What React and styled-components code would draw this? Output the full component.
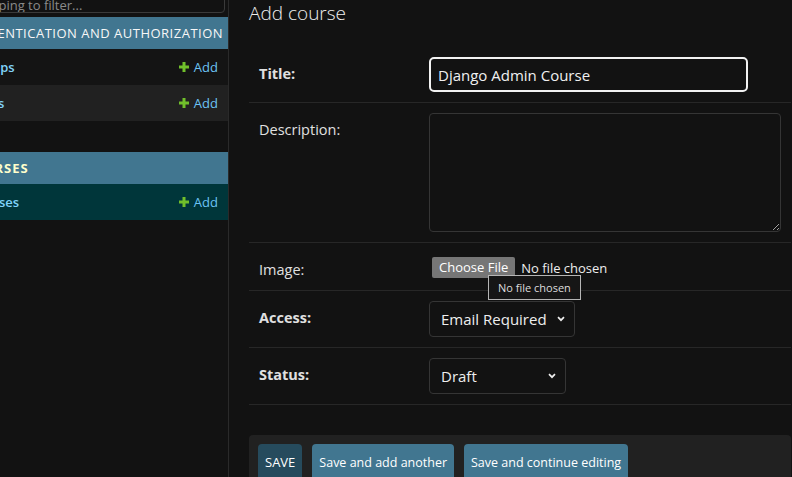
import React from "react";
import styled, { createGlobalStyle } from "styled-components";

const FONT = `"Open Sans", "Noto Sans", "Liberation Sans", sans-serif`;

const GlobalStyle = createGlobalStyle`
  html, body {
    margin: 0;
    padding: 0;
    background: #121212;
    color: #eeeeee;
    font-family: ${FONT};
  }
  * { box-sizing: border-box; }
`;

const Page = styled.div`
  display: flex;
  width: 792px;
  height: 477px;
  overflow: hidden;
  background: #121212;
`;

/* ---------- sidebar ---------- */

const Sidebar = styled.nav`
  flex: 0 0 229px;
  height: 100%;
  overflow: hidden;
  border-right: 1px solid #2a2a2a;
`;

// the sidebar is scrolled to the right and down a little
const SidebarInner = styled.div`
  width: 275px;
  margin: -17px 0 0 -47px;
`;

const FilterInput = styled.input`
  display: block;
  width: 272px;
  height: 30px;
  margin: 0 0 4px 0;
  padding: 14px 6px 0 1px;
  font-family: ${FONT};
  font-size: 13px;
  color: #eee;
  background: #121212;
  border: 1px solid #3a3a3a;
  border-radius: 4px;
  &::placeholder { color: #8a8a8a; }
`;

const Module = styled.div`
  margin-bottom: 31px;
`;

const Caption = styled.div`
  height: 32px;
  padding: 8px 8px 8px ${p => (p.$current ? "10px" : "8px")};
  font-size: 13px;
  line-height: 16px;
  letter-spacing: ${p => (p.$current ? "1px" : "0.5px")};
  text-transform: uppercase;
  background: #417690;
  color: ${p => (p.$current ? "#ffffcc" : "#f7f7f7")};
  font-weight: ${p => (p.$current ? 700 : 400)};
  white-space: nowrap;
`;

const ModelRow = styled.div`
  display: flex;
  align-items: center;
  justify-content: space-between;
  height: 36px;
  padding: 0 10px 0 16px;
  background: ${p => (p.$selected ? "#00363a" : p.$alt ? "#212121" : "#141414")};
`;

const ModelLink = styled.span`
  font-size: 13px;
  font-weight: 600;
  color: #81d4fa;
`;

const AddLink = styled.span`
  display: flex;
  align-items: center;
  gap: 5px;
  font-size: 13px;
  color: #6cc4f5;
`;

const PlusIcon = () => (
  <svg width="10" height="10" viewBox="0 0 10 10">
    <path d="M3.5 0h3v3.5H10v3H6.5V10h-3V6.5H0v-3h3.5z" fill="#70bf2b" />
  </svg>
);

/* ---------- main ---------- */

const Main = styled.main`
  flex: 1;
  padding: 0 2px 0 20px;
`;

const Title = styled.h1`
  margin: 0 0 21px;
  font-size: 19px;
  line-height: 26px;
  font-weight: 300;
  color: #eeeeee;
`;

const FormRow = styled.div`
  position: relative;
  display: flex;
  align-items: flex-start;
  padding: 10px;
  border-bottom: 1px solid #272727;
`;

const Label = styled.label`
  flex: 0 0 170px;
  padding: 7px 10px 0 0;
  font-size: 14.5px;
  line-height: 20px;
  font-weight: ${p => (p.$required ? 700 : 400)};
  color: #e0e0e0;
`;

const TextInput = styled.input`
  width: 319px;
  height: 35px;
  padding: 0 7px;
  font-family: ${FONT};
  font-size: 15px;
  color: #f0f0f0;
  background: #121212;
  border: 2px solid #f2f2f2;
  border-radius: 5px;
  outline: none;
`;

const TextArea = styled.textarea`
  width: 352px;
  height: 119px;
  padding: 5px 6px;
  font-family: ${FONT};
  font-size: 14px;
  color: #eee;
  background: #121212;
  border: 1px solid #353535;
  border-radius: 4px;
  outline: none;
`;

const FileWidget = styled.div`
  display: flex;
  align-items: center;
  gap: 6px;
  padding: 4px 0 0 3px;
  font-size: 13px;
  color: #eeeeee;
`;

const FileButton = styled.span`
  display: inline-block;
  height: 21px;
  padding: 0 7px;
  line-height: 21px;
  background: #767676;
  border-radius: 2px;
  color: #ffffff;
`;

const Tooltip = styled.div`
  position: absolute;
  left: 239px;
  top: 32px;
  height: 25px;
  padding: 0 9px;
  font-size: 11px;
  line-height: 23px;
  color: #dddddd;
  background: #161616;
  border: 1px solid #b5b5b5;
  white-space: nowrap;
`;

const SelectBox = styled.div`
  display: flex;
  align-items: center;
  justify-content: space-between;
  width: ${p => p.$width}px;
  height: 36px;
  padding: 0 9px 0 11px;
  font-size: 15px;
  color: #eeeeee;
  background: #121212;
  border: 1px solid #353535;
  border-radius: 4px;
`;

const Chevron = () => (
  <svg width="8" height="6" viewBox="0 0 8 6">
    <path d="M1 1.2l3 3 3-3" fill="none" stroke="#eeeeee" strokeWidth="1.7" />
  </svg>
);

const SubmitRow = styled.div`
  display: flex;
  gap: 10px;
  margin-top: 30px;
  padding: 9px;
  background: #212121;
  border-radius: 4px;
`;

const Button = styled.button`
  height: 36px;
  padding: 0 7px;
  font-family: ${FONT};
  font-size: ${p => (p.$default ? "13px" : "12.5px")};
  color: #ffffff;
  background: ${p => (p.$default ? "#264b5d" : "#417690")};
  border: none;
  border-radius: 4px;
`;

export default function App() {
  return (
    <>
      <GlobalStyle />
      <Page>
        <Sidebar>
          <SidebarInner>
            <FilterInput placeholder="Start typing to filter..." />
            <Module>
              <Caption>Authentication and Authorization</Caption>
              <ModelRow>
                <ModelLink>Groups</ModelLink>
                <AddLink><PlusIcon />Add</AddLink>
              </ModelRow>
              <ModelRow $alt>
                <ModelLink>Users</ModelLink>
                <AddLink><PlusIcon />Add</AddLink>
              </ModelRow>
            </Module>
            <Module>
              <Caption $current>Courses</Caption>
              <ModelRow $selected>
                <ModelLink>Courses</ModelLink>
                <AddLink><PlusIcon />Add</AddLink>
              </ModelRow>
            </Module>
          </SidebarInner>
        </Sidebar>

        <Main>
          <Title>Add course</Title>
          <FormRow>
            <Label $required>Title:</Label>
            <TextInput defaultValue="Django Admin Course" />
          </FormRow>
          <FormRow>
            <Label>Description:</Label>
            <TextArea />
          </FormRow>
          <FormRow>
            <Label>Image:</Label>
            <FileWidget>
              <FileButton>Choose File</FileButton>
              No file chosen
            </FileWidget>
            <Tooltip>No file chosen</Tooltip>
          </FormRow>
          <FormRow>
            <Label $required>Access:</Label>
            <SelectBox $width={146}>
              Email Required <Chevron />
            </SelectBox>
          </FormRow>
          <FormRow>
            <Label $required>Status:</Label>
            <SelectBox $width={137}>
              Draft <Chevron />
            </SelectBox>
          </FormRow>
          <SubmitRow>
            <Button $default>SAVE</Button>
            <Button>Save and add another</Button>
            <Button>Save and continue editing</Button>
          </SubmitRow>
        </Main>
      </Page>
    </>
  );
}
